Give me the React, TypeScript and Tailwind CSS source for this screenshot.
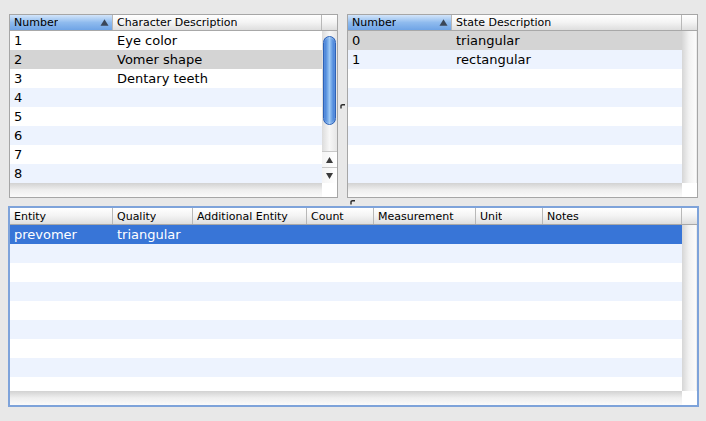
import React from "react";

type Col = { label: string; w: string; sorted?: boolean };

const charCols: Col[] = [
  { label: "Number", w: "w-[103px]", sorted: true },
  { label: "Character Description", w: "w-[209px]" },
];

const stateCols: Col[] = [
  { label: "Number", w: "w-[104px]", sorted: true },
  { label: "State Description", w: "w-[230px]" },
];

const annoCols: Col[] = [
  { label: "Entity", w: "w-[103px]" },
  { label: "Quality", w: "w-[80px]" },
  { label: "Additional Entity", w: "w-[114px]" },
  { label: "Count", w: "w-[67px]" },
  { label: "Measurement", w: "w-[102px]" },
  { label: "Unit", w: "w-[67px]" },
  { label: "Notes", w: "w-[139px]" },
];

const characters = [
  ["1", "Eye color"],
  ["2", "Vomer shape"],
  ["3", "Dentary teeth"],
  ["4", ""],
  ["5", ""],
  ["6", ""],
  ["7", ""],
  ["8", ""],
];

const states = [
  ["0", "triangular"],
  ["1", "rectangular"],
  ["", ""],
  ["", ""],
  ["", ""],
  ["", ""],
  ["", ""],
  ["", ""],
];

const annotations = [
  ["prevomer", "triangular", "", "", "", "", ""],
  ...Array.from({ length: 8 }, () => ["", "", "", "", "", "", ""]),
];

function SortArrow() {
  return (
    <svg width="9" height="7" viewBox="0 0 9 7" className="shrink-0">
      <path d="M4.5 0.3 L8.5 6.7 L0.5 6.7 Z" fill="#3a4658" />
    </svg>
  );
}

function Header({ cols, tall }: { cols: Col[]; tall?: boolean }) {
  return (
    <div
      className={`flex shrink-0 border-b border-[#a8a8a8] ${tall ? "h-[17px]" : "h-[16px]"}`}
    >
      {cols.map((c) => (
        <div
          key={c.label}
          className={`${c.w} shrink-0 flex items-center justify-between border-r border-[#b8b8b8] pl-[4px] pr-[3px] text-[11px] leading-none text-black ${
            c.sorted
              ? "bg-linear-to-b from-[#d3e5fa] via-[#8fbbee] to-[#6fa4e6]"
              : "bg-linear-to-b from-[#ffffff] via-[#f3f3f3] to-[#dedede]"
          }`}
        >
          <span className="truncate">{c.label}</span>
          {c.sorted && <SortArrow />}
        </div>
      ))}
      <div className="flex-1 bg-linear-to-b from-[#ffffff] via-[#f3f3f3] to-[#dedede]" />
    </div>
  );
}

function rowBg(i: number, selected: number, focused: boolean) {
  if (i === selected) return focused ? "bg-[#3875d7] text-white" : "bg-[#d4d4d4] text-black";
  return i % 2 === 1 ? "bg-[#edf3fe] text-black" : "bg-white text-black";
}

function Rows({
  cols,
  data,
  selected,
  focused,
}: {
  cols: Col[];
  data: string[][];
  selected: number;
  focused?: boolean;
}) {
  return (
    <div className="flex-1 flex flex-col overflow-hidden">
      {data.map((r, i) => (
        <div key={i} className={`flex h-[19px] shrink-0 ${rowBg(i, selected, !!focused)}`}>
          {cols.map((c, j) => (
            <div
              key={c.label}
              className={`${c.w} shrink-0 px-[4px] pt-[1px] text-[13px] leading-[18px] whitespace-nowrap overflow-hidden`}
            >
              {r[j]}
            </div>
          ))}
          <div className="flex-1" />
        </div>
      ))}
    </div>
  );
}

function EmptyVTrack() {
  return (
    <div className="w-[15px] shrink-0 bg-linear-to-r from-[#d6d6d6] via-[#f2f2f2] to-[#fbfbfb] border-r border-[#ececec]" />
  );
}

function VScroller() {
  return (
    <div className="w-[15px] shrink-0 flex flex-col bg-linear-to-r from-[#dcdcdc] via-[#f7f7f7] to-[#e6e6e6]">
      <div className="h-[5px]" />
      <div className="mx-[1px] h-[89px] rounded-full border border-[#2c62b8] bg-linear-to-r from-[#2e6fd0] via-[#9cc8f4] to-[#2f6fd0] shadow-[inset_0_0_2px_rgba(255,255,255,0.6)]" />
      <div className="flex-1" />
      <div className="h-[16px] flex items-center justify-center border-t border-[#c8c8c8] bg-linear-to-r from-[#f4f4f4] to-[#ffffff]">
        <svg width="7" height="6" viewBox="0 0 7 6">
          <path d="M3.5 0 L7 6 L0 6 Z" fill="#3b3b3b" />
        </svg>
      </div>
      <div className="h-[16px] flex items-center justify-center border-t border-[#c8c8c8] bg-linear-to-r from-[#f4f4f4] to-[#ffffff]">
        <svg width="7" height="6" viewBox="0 0 7 6">
          <path d="M0 0 L7 0 L3.5 6 Z" fill="#3b3b3b" />
        </svg>
      </div>
    </div>
  );
}

function Footer() {
  return (
    <div className="flex h-[14px] shrink-0">
      <div className="flex-1 bg-linear-to-b from-[#d2d2d2] via-[#efefef] to-[#fafafa]" />
      <div className="w-[15px] bg-white" />
    </div>
  );
}

function Dimple() {
  return (
    <svg width="6" height="5" viewBox="0 0 6 5">
      <path d="M1 4.5 L1 2 Q1 0.8 2.5 0.8 L5 0.8" stroke="#2a2a2a" strokeWidth="1.4" fill="none" />
    </svg>
  );
}

export default function App() {
  return (
    <div className="w-[706px] h-[421px] bg-[#e8e8e8] overflow-hidden pt-[14px] font-['Lucida_Grande','DejaVu_Sans',sans-serif]">
      <div className="flex h-[184px] pl-[9px]">
        {/* Characters table */}
        <div className="w-[329px] shrink-0 flex flex-col border border-[#a6a6a6] bg-white">
          <Header cols={charCols} />
          <div className="flex flex-1 min-h-0">
            <Rows cols={charCols} data={characters} selected={1} />
            <VScroller />
          </div>
          <Footer />
        </div>

        {/* vertical splitter */}
        <div className="w-[9px] shrink-0 flex items-center justify-center">
          <Dimple />
        </div>

        {/* States table */}
        <div className="w-[351px] shrink-0 flex flex-col border border-[#a6a6a6] bg-white">
          <Header cols={stateCols} />
          <div className="flex flex-1 min-h-0">
            <Rows cols={stateCols} data={states} selected={0} />
            <EmptyVTrack />
          </div>
          <Footer />
        </div>
      </div>

      {/* horizontal splitter */}
      <div className="h-[8px] flex items-center justify-center">
        <Dimple />
      </div>

      {/* Annotations table */}
      <div className="ml-[8px] w-[691px] h-[201px] flex flex-col border-2 border-[#7ea3da] bg-white">
        <Header cols={annoCols} tall />
        <div className="flex flex-1 min-h-0">
          <Rows cols={annoCols} data={annotations} selected={0} focused />
          <EmptyVTrack />
        </div>
        <Footer />
      </div>
    </div>
  );
}
